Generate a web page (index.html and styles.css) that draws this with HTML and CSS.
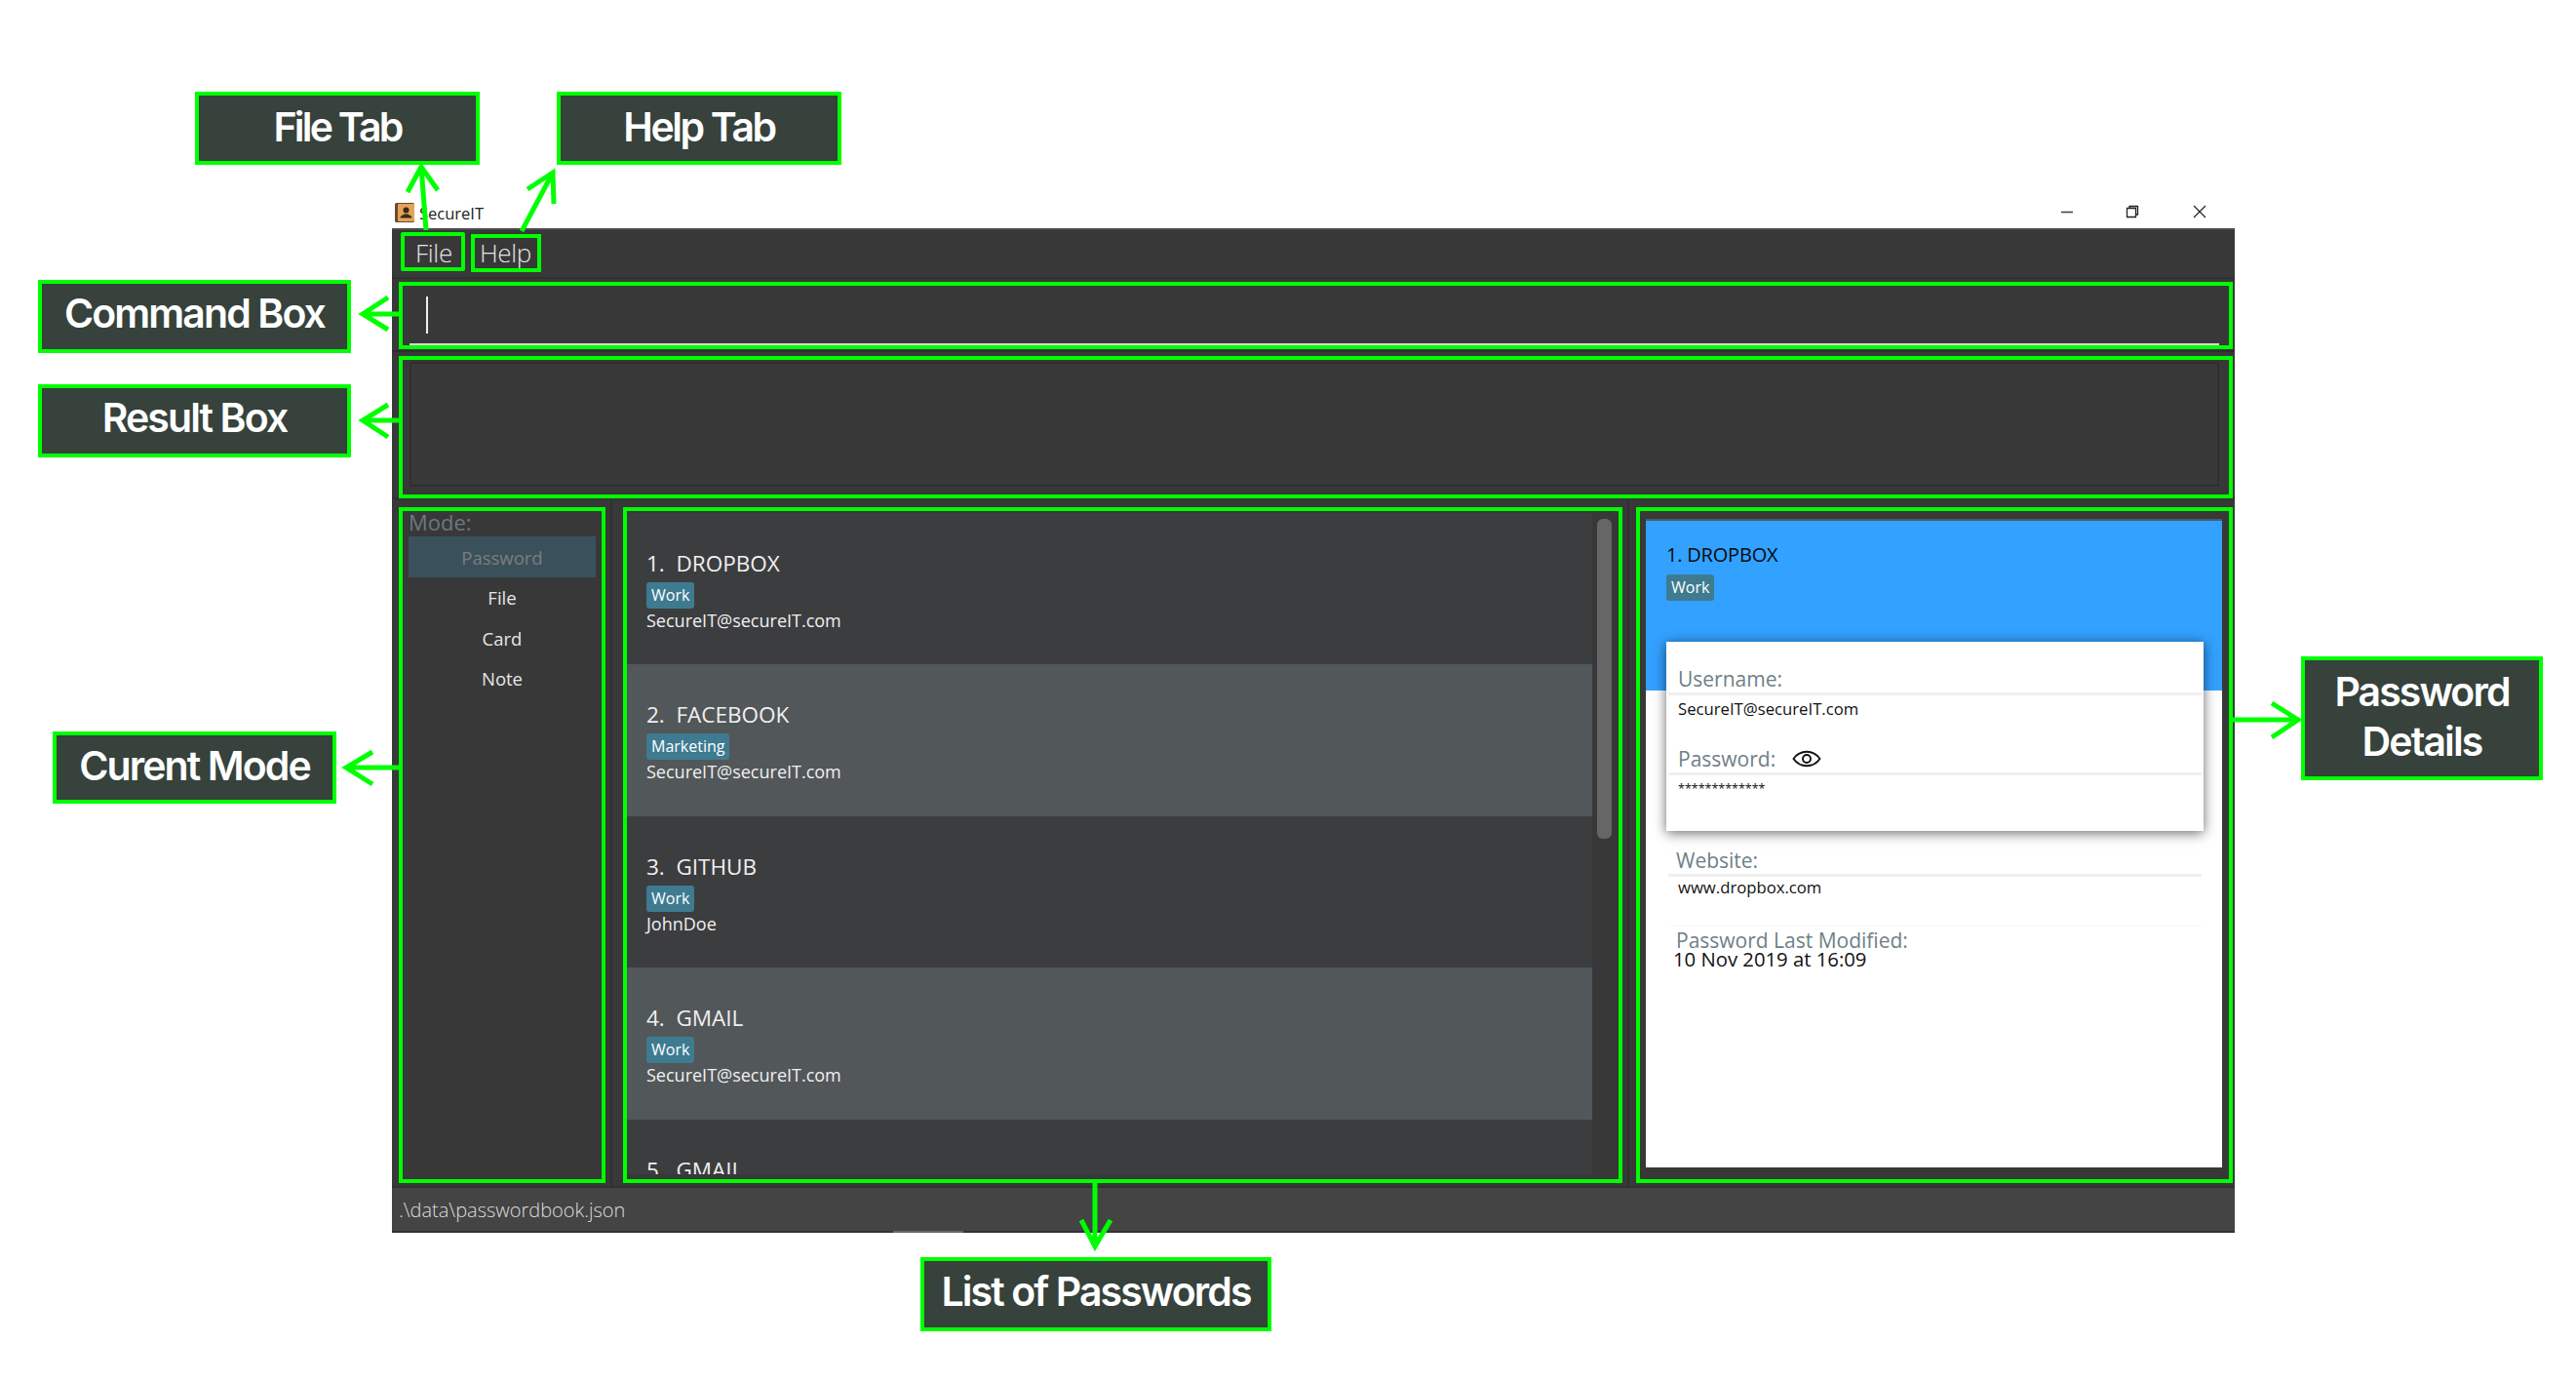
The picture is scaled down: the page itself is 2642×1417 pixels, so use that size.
FILE: index.html
```html
<!DOCTYPE html>
<html lang="en">
<head>
<meta charset="utf-8">
<title>SecureIT</title>
<link rel="stylesheet" href="styles.css">
</head>
<body>
<div class="page">
  <div class="titlebar">
    <svg class="app-icon" viewBox="0 0 20 20" width="20" height="20">
      <rect x="0" y="0" width="20" height="20" rx="1.5" fill="#6b4a2c"/>
      <rect x="3" y="1" width="17" height="18" rx="1" fill="#e0a558"/>
      <circle cx="11.5" cy="7.5" r="3" fill="#3a2a18"/>
      <path d="M5.5 15.5c0-2.5 3-3 4.5-4h3c1.500 1 4.500 1.500 4.500 4z" fill="#3a2a18"/>
    </svg>
    <span class="app-title">SecureIT</span>
    <div class="controls">
      <svg class="ctl-min" viewBox="0 0 14 14" width="14" height="14"><path d="M1 7.500h12" stroke="#444" stroke-width="1.600" fill="none"/></svg>
      <svg viewBox="0 0 14 14" width="14" height="14"><path d="M4 3V1.500h8.500V10H10.500M1.500 3.500h9v9h-9z" stroke="#222" stroke-width="1.300" fill="#fff"/></svg>
      <svg viewBox="0 0 14 14" width="14" height="14"><path d="M1 1l12 12M13 1L1 13" stroke="#222" stroke-width="1.200" fill="none"/></svg>
    </div>
  </div>
  <div class="window">
    <div class="menubar"><span class="menu-file">File</span><span class="menu-help">Help</span></div>
    <div class="command"><div class="command-input"><span class="caret"></span></div></div>
    <div class="result"><div class="result-inner"></div></div>
    <div class="panes">
      <aside class="mode">
        <div class="mode-label">Mode:</div>
        <div class="mode-item selected">Password</div>
        <div class="mode-item">File</div>
        <div class="mode-item">Card</div>
        <div class="mode-item">Note</div>
      </aside>
      <section class="list">
        <div class="rows">
          <article class="row">
            <div class="row-title">1.&nbsp; DROPBOX</div>
            <span class="tag">Work</span>
            <div class="row-user">SecureIT@secureIT.com</div>
          </article>
          <article class="row alt">
            <div class="row-title">2.&nbsp; FACEBOOK</div>
            <span class="tag">Marketing</span>
            <div class="row-user">SecureIT@secureIT.com</div>
          </article>
          <article class="row">
            <div class="row-title">3.&nbsp; GITHUB</div>
            <span class="tag">Work</span>
            <div class="row-user">JohnDoe</div>
          </article>
          <article class="row alt">
            <div class="row-title">4.&nbsp; GMAIL</div>
            <span class="tag">Work</span>
            <div class="row-user">SecureIT@secureIT.com</div>
          </article>
          <article class="row">
            <div class="row-title">5.&nbsp; GMAIL</div>
          </article>
        </div>
        <div class="scrolltrack"><div class="scrollthumb"></div></div>
      </section>
      <section class="details">
        <div class="sheet">
          <header class="sheet-head">
            <div class="sheet-title">1. DROPBOX</div>
            <span class="tag sheet-tag">Work</span>
          </header>
          <div class="card">
            <div class="field-label first">Username:</div>
            <div class="rule"></div>
            <div class="field-value">SecureIT@secureIT.com</div>
            <div class="field-label second">Password:
              <svg class="eye" viewBox="0 0 30 18" width="30" height="18"><path d="M1.500 9C5 4 10 1.800 15 1.800S25 4 28.500 9C25 14 20 16.200 15 16.200S5 14 1.500 9z" fill="none" stroke="#111" stroke-width="1.900"/><circle cx="15" cy="9" r="4" fill="none" stroke="#111" stroke-width="1.900"/></svg>
            </div>
            <div class="rule"></div>
            <div class="field-value stars">*************</div>
          </div>
          <div class="field-label website">Website:</div>
          <div class="rule"></div>
          <div class="field-value">www.dropbox.com</div>
          <div class="rule faint"></div>
          <div class="field-label modified">Password Last Modified:</div>
          <div class="date">10 Nov 2019 at 16:09</div>
        </div>
      </section>
    </div>
    <footer class="status"><span>.\data\passwordbook.json</span><span class="grip"></span></footer>
  </div>

  <div class="hl hl-file"></div>
  <div class="hl hl-help"></div>
  <div class="hl hl-command"></div>
  <div class="hl hl-result"></div>
  <div class="hl hl-mode"></div>
  <div class="hl hl-list"></div>
  <div class="hl hl-details"></div>

  <div class="note note-file">File Tab</div>
  <div class="note note-help">Help Tab</div>
  <div class="note note-command">Command Box</div>
  <div class="note note-result">Result Box</div>
  <div class="note note-mode">Curent Mode</div>
  <div class="note note-details">Password<br>Details</div>
  <div class="note note-list">List of Passwords</div>

  <svg class="arrows" viewBox="0 0 2642 1417" width="2642" height="1417">
    <path d="M437 236L432 171M418 197L432 171L449 195"/>
    <path d="M535 237L566 179M541 194L567 177L568 209"/>
    <path d="M410 322H372M398 305L372 322L398 338"/>
    <path d="M410 431H372M398 415L372 431L398 448"/>
    <path d="M409 787H355M382 771L355 787L382 804"/>
    <path d="M2290 738H2357M2330 721L2357 738L2330 756"/>
    <path d="M1123 1213V1278M1109 1251L1123 1278L1139 1251"/>
  </svg>
</div>
</body>
</html>
```
FILE: styles.css
```css
* { box-sizing: border-box; }
html, body { margin: 0; padding: 0; background: #fff; }
body { font-family: "Open Sans", "Noto Sans", sans-serif; overflow: hidden; }

.page {
  position: relative;
  width: 2642px;
  height: 1417px;
  padding: 205px 350px 0 402px;
}

/* OS title bar */
.titlebar { height: 29px; display: flex; align-items: center; padding-left: 3px; }
.app-icon { flex: none; margin-top: -3px; }
.app-title { margin-left: 5px; font-size: 16.500px; color: #222; margin-top: -3px; }
.controls { margin-left: auto; display: flex; gap: 55px; padding-right: 29px; margin-top: -5px; }
.ctl-min { margin: 0 -2px 0 2px; }

/* window */
.window {
  height: 1030px;
  display: flex;
  flex-direction: column;
  background: #383838;
  border-top: 2px solid #4a4a4a;
}
.menubar {
  height: 50px;
  flex: none;
  display: flex;
  align-items: center;
  padding: 0 0 2px 24px;
  font-size: 26px;
  font-weight: 300;
  color: #e4e4e4;
  border-bottom: 2px solid #303030;
  letter-spacing: -0.3px;
}
.menu-help { margin-left: 28px; }

.command {
  height: 75px;
  flex: none;
  padding: 0 16px 5px 18px;
  border-bottom: 2px solid #2e2e2e;
  display: flex;
}
.command-input {
  flex: 1;
  border-bottom: 2px solid #d8d8d8;
  padding: 18px 0 0 17px;
}
.caret { display: block; width: 2px; height: 38px; background: #eee; }

.result {
  height: 151px;
  flex: none;
  padding: 10px 16px 11px 18px;
  border-bottom: 2px solid #303030;
  display: flex;
}
.result-inner { flex: 1; border: 2px solid #2f2f2f; }

.panes { flex: 1; display: flex; min-height: 0; border-bottom: 2px solid #303030; }

/* mode pane */
.mode {
  width: 226px;
  flex: none;
  padding: 8px 15px 0 17px;
  border-right: 2px solid #303030;
}
.mode-label { color: #6a7880; font-size: 22px; line-height: 30px; }
.mode-item {
  height: 41.500px;
  display: flex;
  align-items: center;
  justify-content: center;
  font-size: 18.500px;
  color: #e6e6e6;
}
.mode-item.selected { background: #3a515c; color: #7d7d7d; height: 42px; }

/* list pane */
.list {
  width: 1043px;
  flex: none;
  padding: 14px 3px 12px 15px;
  border-right: 2px solid #303030;
  display: flex;
  background: #383838;
}
.rows { width: 990px; flex: none; overflow: hidden; background: #3c3d3f; }
.row { height: 155.400px; padding: 38px 0 0 20px; background: #3c3d3f; color: #f0f0f0; }
.row.alt { background: #525759; }
.row-title { font-size: 22.500px; line-height: 27px; }
.tag {
  display: inline-block;
  height: 27px;
  margin-top: 6px;
  padding: 0 5px;
  line-height: 26px;
  border-radius: 3px;
  background: #3e7b91;
  color: #fff;
  font-size: 16px;
}
.row-user { font-size: 18px; line-height: 26px; margin-top: -1px; }
.scrolltrack { flex: 1; padding: 6px 0 0 5px; }
.scrollthumb { width: 15px; height: 328px; border-radius: 6px; background: #666; }

/* detail pane */
.details { flex: 1; padding: 20px 13px 18px 17px; }
.sheet { position: relative; height: 665px; background: #fff; border-top: 2px solid #4a5a66; }
.sheet-head { height: 174px; background: #33a1ff; padding: 21px 0 0 21px; }
.sheet-title { font-size: 20px; line-height: 28px; color: #0a0a0a; letter-spacing: -0.2px; }
.sheet-tag { margin: 6px 0 0 0; }
.card {
  position: absolute;
  left: 21px;
  right: 19px;
  top: 124px;
  height: 194px;
  padding: 23px 2px 0;
  background: #fff;
  box-shadow: 0 2px 12px rgba(0, 0, 0, 0.6);
}
.field-label { color: #6f7f87; font-size: 21px; line-height: 30px; padding-left: 10px; }
.field-label.second { display: flex; align-items: center; gap: 17px; margin-top: 23px; }
.field-label.website { margin: 0; position: absolute; left: 21px; top: 333px; padding-left: 10px; }
.rule { height: 3px; background: #efefef; margin-top: -1px; }
.field-value { font-size: 16.700px; line-height: 27px; color: #111; padding-left: 10px; }
.stars { font-size: 12.500px; line-height: 22px; margin-top: 3px; }
.sheet > .rule { margin: 362px 21px 0 23px; position: absolute; left: 0; right: 0; top: 0; }
.sheet > .field-value { position: absolute; left: 23px; top: 362px; }
.sheet > .rule.faint { height: 1px; margin-top: 415px; background: #f8f8f8; }
.field-label.modified { position: absolute; left: 21px; top: 415px; padding-left: 10px; font-size: 21px; line-height: 30px; }
.date { position: absolute; left: 28px; top: 435px; font-size: 20.300px; font-weight: 500; line-height: 28px; color: #111; }

/* status bar */
.status {
  height: 46px;
  flex: none;
  position: relative;
  display: flex;
  align-items: center;
  padding: 0 0 0 7px;
  background: #444;
  border-bottom: 2px solid #333;
  color: #ddd;
  font-size: 20px;
  font-weight: 300;
}
.grip { position: absolute; left: 514px; bottom: -2px; width: 72px; height: 2px; background: #666; }

/* annotation overlay */
.hl { position: absolute; border: 4px solid #00ff00; }
.hl-file { left: 411px; top: 238px; width: 66px; height: 40px; border-radius: 2px; }
.hl-help { left: 483px; top: 240px; width: 72px; height: 39px; }
.hl-command { left: 409px; top: 289px; width: 1881px; height: 69px; }
.hl-result { left: 409px; top: 365px; width: 1881px; height: 146px; }
.hl-mode { left: 409px; top: 520px; width: 212px; height: 693px; }
.hl-list { left: 639px; top: 520px; width: 1025px; height: 693px; }
.hl-details { left: 1678px; top: 520px; width: 612px; height: 693px; }

.note {
  position: absolute;
  display: flex;
  align-items: center;
  justify-content: center;
  text-align: center;
  padding-bottom: 3px;
  background: #36423b;
  border: 4px solid #00ff00;
  color: #fff;
  font-family: Inter, "Noto Sans", sans-serif;
  font-weight: 600;
  font-size: 41px;
  line-height: 51px;
  letter-spacing: -1.900px;
}
.note-file { left: 200px; top: 94px; width: 292px; height: 75px; letter-spacing: -2.800px; }
.note-help { left: 571px; top: 94px; width: 292px; height: 75px; letter-spacing: -2.400px; }
.note-command { left: 39px; top: 287px; width: 321px; height: 75px; padding-bottom: 7px; }
.note-result { left: 39px; top: 394px; width: 321px; height: 75px; padding-bottom: 7px; }
.note-mode { left: 54px; top: 750px; width: 291px; height: 74px; }
.note-details { left: 2360px; top: 673px; width: 248px; height: 127px; }
.note-list { left: 944px; top: 1289px; width: 360px; height: 76px; padding-bottom: 5px; }

.arrows { position: absolute; left: 0; top: 0; pointer-events: none; }
.arrows path { fill: none; stroke: #00ff00; stroke-width: 5; }
```
